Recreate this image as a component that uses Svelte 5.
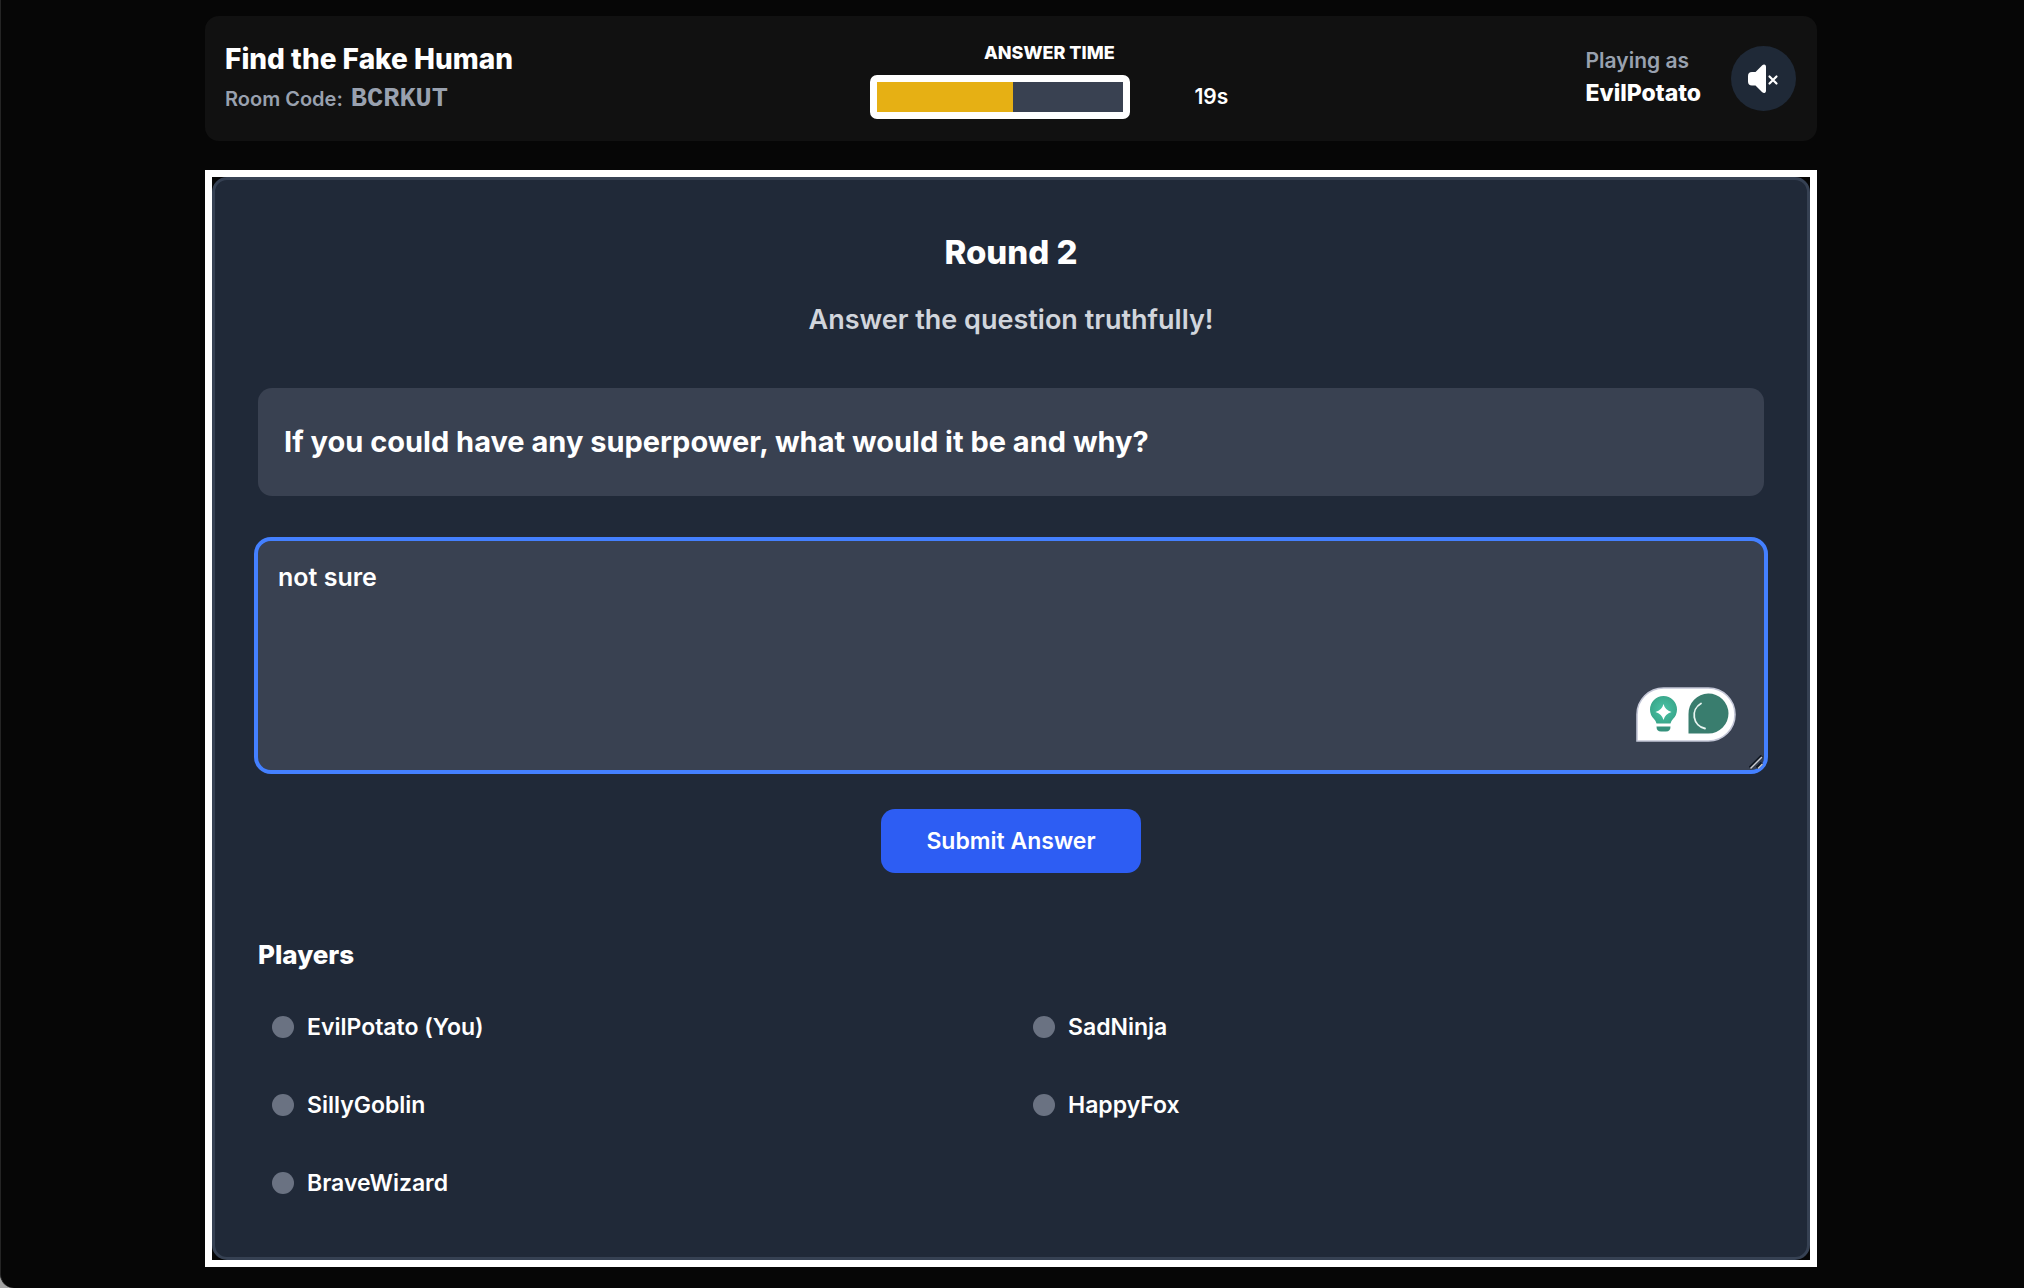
<script>
  const total = 246;
  const left = 136;
  let answer = $state('not sure');
  let muted = $state(true);
  const players = ['EvilPotato (You)', 'SadNinja', 'SillyGoblin', 'HappyFox', 'BraveWizard'];
</script>

<div class="page">
  <div class="shell">
    <header class="topbar">
      <div class="room">
        <h1>Find the Fake Human</h1>
        <p>Room Code: <span class="code">BCRKUT</span></p>
      </div>

      <div class="timer">
        <div class="timer-label" id="timer-label">ANSWER TIME</div>
        <div class="timer-row">
          <div class="bar" role="progressbar" aria-labelledby="timer-label" aria-valuemin="0" aria-valuemax={total} aria-valuenow={left}>
            <div class="fill" style="width: {(left / total) * 100}%"></div>
          </div>
          <span class="seconds">19s</span>
        </div>
      </div>

      <div class="me">
        <div class="who">
          <span class="playing">Playing as</span>
          <strong>EvilPotato</strong>
        </div>
        <button class="mute" type="button" aria-label="Toggle sound" aria-pressed={muted} onclick={() => (muted = !muted)}>
          <svg viewBox="0 0 32 32" width="32" height="32" aria-hidden="true">
            <path d="M1 13q0-4 4-4h3.500l6.500-6.500q1.500-1.500 3-.8 1 .5 1 2v24q0 1.500-1 2-1.500.7-3-.8L8.500 22.500H5q-4 0-4-4z" fill="#fff" />
            <path d="M22.500 13.500l7 7m0-7l-7 7" stroke="#fff" stroke-width="2.200" stroke-linecap="round" />
          </svg>
        </button>
      </div>
    </header>

    <div class="frame">
      <main class="panel">
        <h2>Round 2</h2>
        <p class="hint">Answer the question truthfully!</p>

        <div class="question" id="question">If you could have any superpower, what would it be and why?</div>

        <div class="answer">
          <textarea aria-labelledby="question" bind:value={answer} spellcheck="false"></textarea>
          <div class="helper">
            <svg viewBox="0 0 100 55" width="100" height="55" aria-hidden="true">
              <defs>
                <radialGradient id="glow"><stop offset="0" stop-color="#49c3a5" /><stop offset="1" stop-color="#3aa88c" /></radialGradient>
              </defs>
              <path d="M1 54V27.500A26.500 26.500 0 0 1 27.500 1h45a26.500 26.500 0 0 1 0 53z" fill="#fff" stroke="#c3c6d6" stroke-width="1.600" />
              <path d="M20.500 36.500q-.5-2.500-2.500-4.500a13.500 13.500 0 1 1 19 0q-2 2-2.500 4.500z" fill="url(#glow)" />
              <path d="M27.500 17q1.500 6 8 8-6.500 2-8 8-1.500-6-8-8 6.500-2 8-8z" fill="#fff" />
              <path d="M20.500 39.500h14q0 5-4.500 5h-5q-4.500 0-4.500-5z" fill="#35917c" />
              <path d="M52.500 46.500V27a20 20 0 1 1 20 19.500z" fill="#397d6e" />
              <path d="M65 16.500a13.500 13.500 0 0 0 4 25" fill="none" stroke="#e8f5f1" stroke-width="1.800" stroke-linecap="round" />
            </svg>
          </div>
          <svg class="grip" viewBox="0 0 14 14" width="14" height="14" aria-hidden="true">
            <path d="M1 13L13 1M8 13l5-5" stroke="#111722" stroke-width="3.500" />
            <path d="M1.500 13.500L13 2M9 13.500L13.500 9" stroke="#c9ccd2" stroke-width="1.500" />
          </svg>
        </div>

        <button class="submit" type="button">Submit Answer</button>

        <h3>Players</h3>
        <ul class="players">
          {#each players as name}
            <li><span class="dot"></span>{name}</li>
          {/each}
        </ul>
      </main>
    </div>
  </div>
</div>

<style>
  :global(body) {
    margin: 0;
    background: #a3a3a3;
  }
  .page,
  .page * {
    box-sizing: border-box;
  }
  .page {
    min-height: 100vh;
    padding: 16px 207px 20px 204px;
    background: #060606;
    border-left: 1px solid #242424;
    border-bottom-left-radius: 14px;
    color: #fff;
    font-family: Inter, 'Liberation Sans', sans-serif;
    font-size: 23px;
    font-weight: 600;
    line-height: 32px;
  }
  h1, h2, h3, p, ul {
    margin: 0;
    padding: 0;
  }
  .shell {
    display: flex;
    flex-direction: column;
    gap: 29px;
  }
  .topbar {
    display: flex;
    align-items: center;
    justify-content: space-between;
    min-height: 125px;
    padding: 20px 21px 20px 20px;
    background: #111;
    border-radius: 14px;
  }
  h1 {
    font-size: 28px;
    font-weight: 800;
    line-height: 40px;
  }
  .room p {
    display: flex;
    align-items: baseline;
    gap: 8px;
    color: #99a1af;
    font-size: 20px;
    line-height: 40px;
  }
  .code {
    font-family: 'Liberation Mono', monospace;
    font-size: 27px;
    font-weight: 700;
  }
  .timer {
    display: flex;
    flex-direction: column;
    gap: 6px;
    padding-bottom: 2px;
  }
  .timer-label {
    font-size: 18px;
    font-weight: 800;
    text-align: center;
  }
  .timer-row {
    display: flex;
    align-items: center;
  }
  .bar {
    width: 260px;
    height: 44px;
    background: #394151;
    border: 7px solid #fff;
    border-radius: 7px;
  }
  .fill {
    height: 100%;
    background: #e6b014;
  }
  .seconds {
    width: 98px;
    font-size: 21px;
    text-align: right;
  }
  .me {
    display: flex;
    align-items: center;
    gap: 30px;
  }
  .who {
    display: flex;
    flex-direction: column;
    padding-bottom: 4px;
  }
  .playing {
    color: #99a1af;
    font-size: 21px;
  }
  .who strong {
    font-weight: 800;
  }
  .mute {
    display: grid;
    place-items: center;
    width: 65px;
    height: 65px;
    padding: 0;
    border: 0;
    border-radius: 50%;
    background: #1f2937;
  }
  .frame {
    border: 7px solid #fff;
    background: #060606;
  }
  .panel {
    display: flex;
    flex-direction: column;
    padding: 48px 43px 43px;
    background: #202938;
    border: 3px solid #364153;
    border-radius: 15px;
  }
  h2 {
    font-size: 33px;
    font-weight: 800;
    line-height: 48px;
    text-align: center;
  }
  .hint {
    margin-top: 24px;
    color: #d1d5dc;
    font-size: 27px;
    font-weight: 600;
    line-height: 40px;
    text-align: center;
  }
  .question {
    margin-top: 48px;
    padding: 32px 26px;
    background: #394151;
    border-radius: 14px;
    font-size: 29px;
    font-weight: 700;
    line-height: 44px;
  }
  .answer {
    position: relative;
    display: grid;
    margin-top: 45px;
  }
  textarea {
    height: 229px;
    padding: 20px;
    border: 0;
    border-radius: 13px;
    outline: 4px solid #4480ff;
    background: #394151;
    color: #fff;
    font: inherit;
    font-size: 25px;
    resize: none;
  }
  .helper {
    position: absolute;
    right: 28px;
    bottom: 28px;
    display: flex;
  }
  .grip {
    position: absolute;
    right: 1px;
    bottom: 1px;
  }
  .submit {
    align-self: center;
    margin-top: 39px;
    min-width: 260px;
    height: 64px;
    padding: 0 32px;
    border: 0;
    border-radius: 14px;
    background: #2d5df3;
    color: #fff;
    font: inherit;
  }
  h3 {
    margin-top: 62px;
    font-size: 26px;
    font-weight: 800;
    line-height: 40px;
  }
  .players {
    display: grid;
    grid-template-columns: 1fr 1fr;
    gap: 16px;
    margin-top: 21px;
    list-style: none;
  }
  .players li {
    display: flex;
    align-items: center;
    gap: 13px;
    padding: 15px 14px;
  }
  .dot {
    width: 22px;
    height: 22px;
    border-radius: 50%;
    background: #6a7282;
  }
</style>
